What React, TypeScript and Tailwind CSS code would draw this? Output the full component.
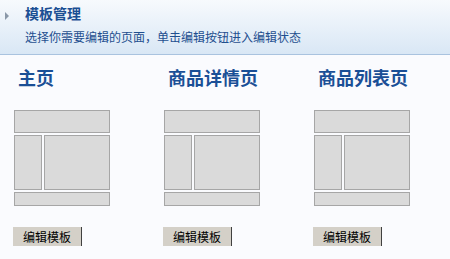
import React from 'react';

const pages = ['主页', '商品详情页', '商品列表页'];

function Layout() {
  return (
    <div className="ml-[14px] flex w-[96px] flex-col gap-[2px]">
      <div className="h-[23px] border border-[#a6a6a6] bg-[#dadada]" />
      <div className="flex h-[55px] gap-[2px]">
        <div className="w-[28px] border border-[#a6a6a6] bg-[#dadada]" />
        <div className="flex-1 border border-[#a6a6a6] bg-[#dadada]" />
      </div>
      <div className="h-[14px] border border-[#a6a6a6] bg-[#dadada]" />
    </div>
  );
}

export default function App() {
  return (
    <div
      className="h-[259px] w-[450px] overflow-hidden bg-[#fafbfe]"
      style={{ fontFamily: '"Noto Sans CJK SC", "Noto Sans", sans-serif' }}
    >
      {/* header */}
      <div className="relative h-[55px] border-b border-[#a9c3df] bg-gradient-to-b from-[#f7fafd] to-[#d9e7f5] pl-[25px]">
        <span className="absolute left-[5px] top-[12px] h-0 w-0 border-y-[4px] border-l-[4px] border-y-transparent border-l-[#8a98a8]" />
        <div className="pt-[5px] text-[14px] font-bold leading-[16px] text-[#1b4f93]">模板管理</div>
        <div className="mt-[9px] text-[12px] leading-[14px] text-[#1f4f8f]">
          选择你需要编辑的页面，单击编辑按钮进入编辑状态
        </div>
      </div>

      {/* columns */}
      <div className="flex">
        {pages.map((p) => (
          <div key={p} className="w-[150px]">
            <div className="ml-[18px] mt-[12px] text-[18px] font-bold leading-[20px] text-[#1a4f96]">{p}</div>
            <div className="mt-[23px]">
              <Layout />
            </div>
            <button className="ml-[13px] mt-[21px] flex h-[19px] w-[69px] items-center justify-center border-r border-[#404040] bg-[#d4d0c8] text-[12px] leading-none text-black">
              编辑模板
            </button>
          </div>
        ))}
      </div>
    </div>
  );
}
